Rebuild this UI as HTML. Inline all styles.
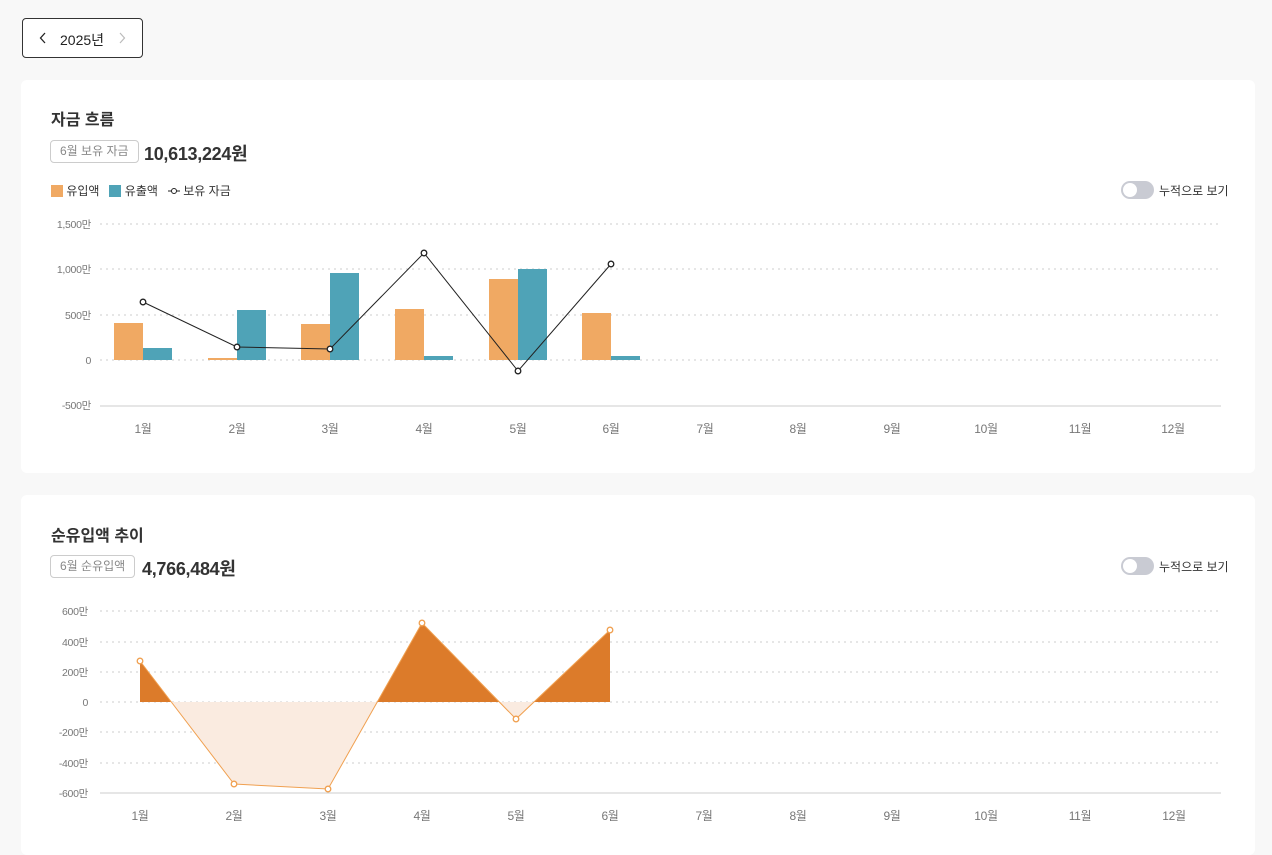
<!DOCTYPE html>
<html><head><meta charset="utf-8"><style>
*{margin:0;padding:0;box-sizing:border-box}
body{width:1272px;height:841px;background:#f8f8f8;font-family:"Liberation Sans","Noto Sans CJK KR",sans-serif;position:relative;overflow:hidden;color:#333}
.abs{position:absolute}
.card{position:absolute;left:21px;width:1234px;background:#fff;border-radius:6px}
.yr{left:22px;top:18px;width:121px;height:40px;border:1px solid #333;border-radius:4px;background:#fff;font-size:14px;color:#222}
.title{font-size:16px;font-weight:bold;color:#333}
.tag{border:1px solid #ccc;border-radius:4px;font-size:12px;color:#888;height:23px;line-height:21px;padding:0 9px}
.big{font-size:18px;font-weight:bold;color:#333;letter-spacing:-0.3px}
.tog{width:33px;height:18px;border-radius:9px;background:#c9cbd3}
.tog:after{content:"";position:absolute;left:2px;top:2px;width:14px;height:14px;border-radius:7px;background:#fff}
.tl{font-size:12px;color:#333}
</style></head><body>
<div class="abs yr"><svg class="abs" style="left:16px;top:13px" width="8" height="12"><path d="M6 1 L1.5 6 L6 11" fill="none" stroke="#222" stroke-width="1.3"/></svg><span class="abs" style="left:37px;top:11px">2025년</span><svg class="abs" style="left:95px;top:13px" width="8" height="12"><path d="M2 1 L6.5 6 L2 11" fill="none" stroke="#bbb" stroke-width="1.2"/></svg></div>
<div class="card" style="top:80px;height:393px"></div>
<div class="card" style="top:495px;height:360px"></div>

<div class="abs title" style="left:51px;top:106px">자금 흐름</div>
<div class="abs tag" style="left:50px;top:140px">6월 보유 자금</div>
<div class="abs big" style="left:144px;top:140px">10,613,224원</div>
<div class="abs tl" style="left:51px;top:182px"><span style="display:inline-block;width:12px;height:12px;background:#f0a963;vertical-align:-2px"></span> 유입액 &nbsp;&nbsp;<span style="display:inline-block;width:12px;height:12px;background:#4fa3b7;vertical-align:-2px"></span> 유출액 &nbsp;&nbsp;<svg width="12" height="8" style="vertical-align:0"><line x1="0" y1="4" x2="12" y2="4" stroke="#222"/><circle cx="6" cy="4" r="2.5" fill="#fff" stroke="#222"/></svg> 보유 자금</div>
<div class="abs tog" style="left:1121px;top:181px"></div><div class="abs tl" style="left:1159px;top:182px">누적으로 보기</div>

<div class="abs title" style="left:51px;top:522px">순유입액 추이</div>
<div class="abs tag" style="left:50px;top:555px">6월 순유입액</div>
<div class="abs big" style="left:142px;top:555px">4,766,484원</div>
<div class="abs tog" style="left:1121px;top:557px"></div><div class="abs tl" style="left:1159px;top:558px">누적으로 보기</div>

<svg class="abs" style="left:0;top:0" width="1272" height="841" font-family="Liberation Sans, Noto Sans CJK KR, sans-serif" font-size="10.5" fill="#777" letter-spacing="-0.3">
<g stroke="#ccc" stroke-dasharray="2,4">
<line x1="100" y1="224" x2="1221" y2="224"/><line x1="100" y1="269" x2="1221" y2="269"/><line x1="100" y1="315" x2="1221" y2="315"/><line x1="100" y1="360" x2="1221" y2="360"/>
</g>
<line x1="100" y1="406" x2="1221" y2="406" stroke="#ccc"/>
<g text-anchor="end"><text x="91" y="228">1,500만</text><text x="91" y="273">1,000만</text><text x="91" y="319">500만</text><text x="91" y="364">0</text><text x="91" y="409">-500만</text></g>
<g text-anchor="middle" font-size="12"><text x="143" y="433">1월</text><text x="237" y="433">2월</text><text x="330" y="433">3월</text><text x="424" y="433">4월</text><text x="518" y="433">5월</text><text x="611" y="433">6월</text><text x="705" y="433">7월</text><text x="798" y="433">8월</text><text x="892" y="433">9월</text><text x="986" y="433">10월</text><text x="1080" y="433">11월</text><text x="1173" y="433">12월</text></g>
<g fill="#f0a963"><rect x="114" y="323" width="29" height="37"/><rect x="208" y="358" width="29" height="2"/><rect x="301" y="324" width="29" height="36"/><rect x="395" y="309" width="29" height="51"/><rect x="489" y="279" width="29" height="81"/><rect x="582" y="313" width="29" height="47"/></g>
<g fill="#4fa3b7"><rect x="143" y="348" width="29" height="12"/><rect x="237" y="310" width="29" height="50"/><rect x="330" y="273" width="29" height="87"/><rect x="424" y="356" width="29" height="4"/><rect x="518" y="269" width="29" height="91"/><rect x="611" y="356" width="29" height="4"/></g>
<polyline points="143,302 237,347 330,349 424,253 518,371 611,264" fill="none" stroke="#222" stroke-width="1"/>
<g fill="#fff" stroke="#222" stroke-width="1.3"><circle cx="143" cy="302" r="2.8"/><circle cx="237" cy="347" r="2.8"/><circle cx="330" cy="349" r="2.8"/><circle cx="424" cy="253" r="2.8"/><circle cx="518" cy="371" r="2.8"/><circle cx="611" cy="264" r="2.8"/></g>

<g stroke="#ccc" stroke-dasharray="2,4">
<line x1="100" y1="611" x2="1218" y2="611"/><line x1="100" y1="642" x2="1218" y2="642"/><line x1="100" y1="672" x2="1218" y2="672"/><line x1="100" y1="702" x2="1218" y2="702"/><line x1="100" y1="732" x2="1218" y2="732"/><line x1="100" y1="763" x2="1218" y2="763"/>
</g>
<line x1="100" y1="793" x2="1221" y2="793" stroke="#ccc"/>
<g text-anchor="end"><text x="88" y="615">600만</text><text x="88" y="646">400만</text><text x="88" y="676">200만</text><text x="88" y="706">0</text><text x="88" y="736">-200만</text><text x="88" y="767">-400만</text><text x="88" y="797">-600만</text></g>
<g text-anchor="middle" font-size="12"><text x="140" y="820">1월</text><text x="234" y="820">2월</text><text x="328" y="820">3월</text><text x="422" y="820">4월</text><text x="516" y="820">5월</text><text x="610" y="820">6월</text><text x="704" y="820">7월</text><text x="798" y="820">8월</text><text x="892" y="820">9월</text><text x="986" y="820">10월</text><text x="1080" y="820">11월</text><text x="1174" y="820">12월</text></g>
<g fill="#faebe0"><polygon points="171,702 234,784 328,789 377,702"/><polygon points="499,702 516,719 534,702"/></g>
<g fill="#dc7b2a"><polygon points="140,702 140,661 171,702"/><polygon points="377,702 422,623 499,702"/><polygon points="534,702 610,630 610,702"/></g>
<polyline points="140,661 234,784 328,789 422,623 516,719 610,630" fill="none" stroke="#f0a050" stroke-width="1"/>
<g fill="#fff" stroke="#f0a050" stroke-width="1.3"><circle cx="140" cy="661" r="2.8"/><circle cx="234" cy="784" r="2.8"/><circle cx="328" cy="789" r="2.8"/><circle cx="422" cy="623" r="2.8"/><circle cx="516" cy="719" r="2.8"/><circle cx="610" cy="630" r="2.8"/></g>
</svg>
</body></html>
